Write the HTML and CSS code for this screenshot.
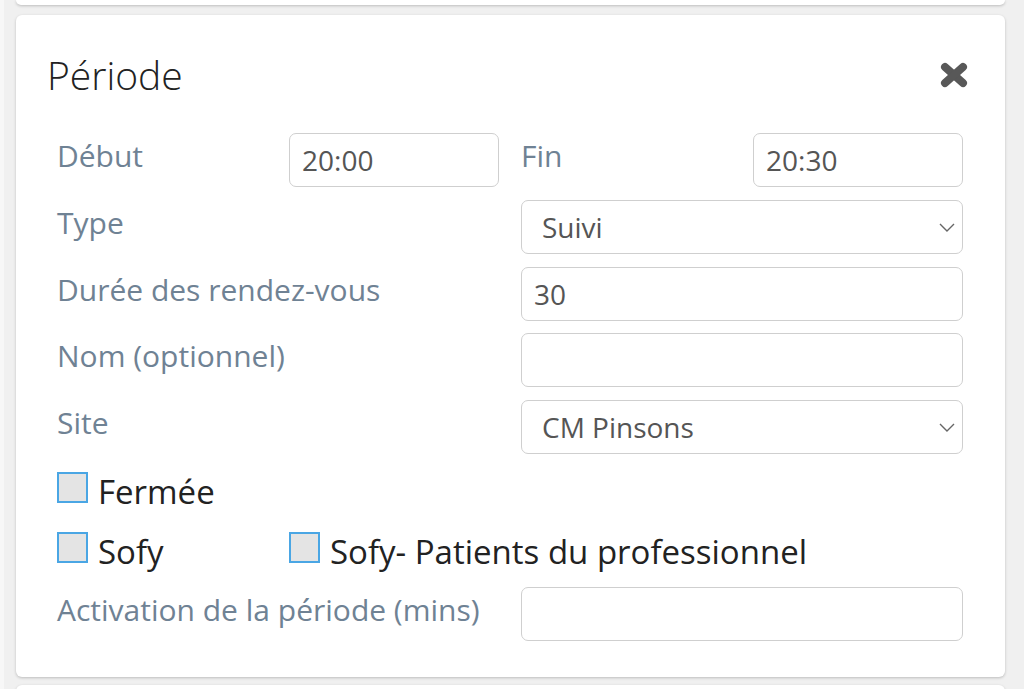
FILE: index.html
```html
<!DOCTYPE html>
<html lang="fr">
<head>
    <meta charset="UTF-8">
    <meta name="viewport" content="width=device-width, initial-scale=1.0">
    <title>Période</title>
    <link rel="stylesheet" href="styles.css">
</head>
<body>
    <div class="page">
        <div class="card card-stub top"></div>

        <div class="card period">
            <div class="period-head">
                <h2>Période</h2>
                <button class="close" type="button" aria-label="Fermer">
                    <svg width="28" height="26" viewBox="0 0 28 26">
                        <line x1="5" y1="5" x2="23" y2="21" />
                        <line x1="23" y1="5" x2="5" y2="21" />
                    </svg>
                </button>
            </div>

            <form class="period-form">
                <div class="fields">
                    <label class="field-label">Début</label>
                    <input class="input" type="text" value="20:00">
                    <label class="field-label">Fin</label>
                    <input class="input" type="text" value="20:30">

                    <label class="field-label span-2">Type</label>
                    <div class="select-wrap span-2">
                        <select class="input select">
                            <option>Suivi</option>
                        </select>
                        <svg class="chevron" width="16" height="9" viewBox="0 0 16 9"><polyline points="1,1 8,8 15,1" /></svg>
                    </div>

                    <label class="field-label span-2">Durée des rendez-vous</label>
                    <input class="input span-2" type="text" value="30">

                    <label class="field-label span-2">Nom (optionnel)</label>
                    <input class="input span-2" type="text" value="">

                    <label class="field-label span-2">Site</label>
                    <div class="select-wrap span-2">
                        <select class="input select">
                            <option>CM Pinsons</option>
                        </select>
                        <svg class="chevron" width="16" height="9" viewBox="0 0 16 9"><polyline points="1,1 8,8 15,1" /></svg>
                    </div>
                </div>

                <div class="checks">
                    <label class="check first"><input type="checkbox"><span>Fermée</span></label>
                    <label class="check first"><input type="checkbox"><span>Sofy</span></label>
                    <label class="check wide"><input type="checkbox"><span>Sofy- Patients du professionnel</span></label>
                </div>

                <div class="fields activation">
                    <label class="field-label span-2">Activation de la période (mins)</label>
                    <input class="input span-2" type="text" value="">
                </div>
            </form>
        </div>

        <div class="card card-stub bottom"></div>
    </div>
</body>
</html>
```

FILE: styles.css
```css
* {
    margin: 0;
    padding: 0;
    box-sizing: border-box;
}

body {
    font-family: 'Open Sans', 'Noto Sans', sans-serif;
    color: #222;
    background-color: #f0f0f0;
    overflow: hidden;
}

.page {
    border-left: 4px solid #f7f7f7;
    padding: 0 19px 0 12px;
}

.card {
    background: #fff;
    border-radius: 6px;
    box-shadow: 0 1px 3px rgba(0,0,0,0.22);
}

.card-stub.top {
    height: 5px;
    border-radius: 0 0 6px 6px;
    margin-bottom: 10px;
}

.card-stub.bottom {
    height: 20px;
    margin-top: 8px;
}

.period {
    padding: 39px 42px 36px 31px;
}

.period-head {
    display: flex;
    align-items: center;
    justify-content: space-between;
    height: 42px;
}

.period-head h2 {
    font-size: 39px;
    font-weight: 300;
    line-height: 42px;
    color: #222;
}

.close {
    border: none;
    background: none;
    display: flex;
    margin-right: -5px;
    cursor: pointer;
}

.close line {
    stroke: #585858;
    stroke-width: 8;
    stroke-linecap: round;
}

.period-form {
    margin: 37px 0 0 10px;
}

.fields {
    display: grid;
    grid-template-columns: repeat(4, 1fr);
    column-gap: 22px;
    row-gap: 12.75px;
}

.span-2 {
    grid-column: span 2;
}

.field-label {
    font-size: 30px;
    line-height: 46px;
    color: #6f8294;
    white-space: nowrap;
}

.input {
    width: 100%;
    height: 54px;
    border: 1.5px solid #cfcfcf;
    border-radius: 7px;
    padding: 0 12px;
    font-family: inherit;
    font-size: 28px;
    color: #555;
    background: #fff;
    outline: none;
}

.select-wrap {
    position: relative;
}

.select {
    appearance: none;
    -webkit-appearance: none;
    padding-left: 20px;
}

.chevron {
    position: absolute;
    right: 8px;
    top: 23px;
    pointer-events: none;
}

.chevron polyline {
    fill: none;
    stroke: #666;
    stroke-width: 1.4;
}

.checks {
    display: grid;
    grid-template-columns: repeat(4, 1fr);
    column-gap: 22px;
    row-gap: 25px;
    margin-top: 18px;
}

.check {
    display: flex;
    align-items: flex-start;
    gap: 10px;
    height: 35px;
    font-size: 33px;
    line-height: 31px;
    color: #222;
    white-space: nowrap;
}

.check span {
    padding-top: 4px;
}

.check.first {
    grid-column: 1;
}

.check.wide {
    grid-column: span 3;
}

.check input {
    appearance: none;
    -webkit-appearance: none;
    flex: none;
    width: 31px;
    height: 31px;
    border: 2px solid #4aa6e4;
    background: #e4e4e4;
}

.activation {
    margin-top: 20px;
}
```
